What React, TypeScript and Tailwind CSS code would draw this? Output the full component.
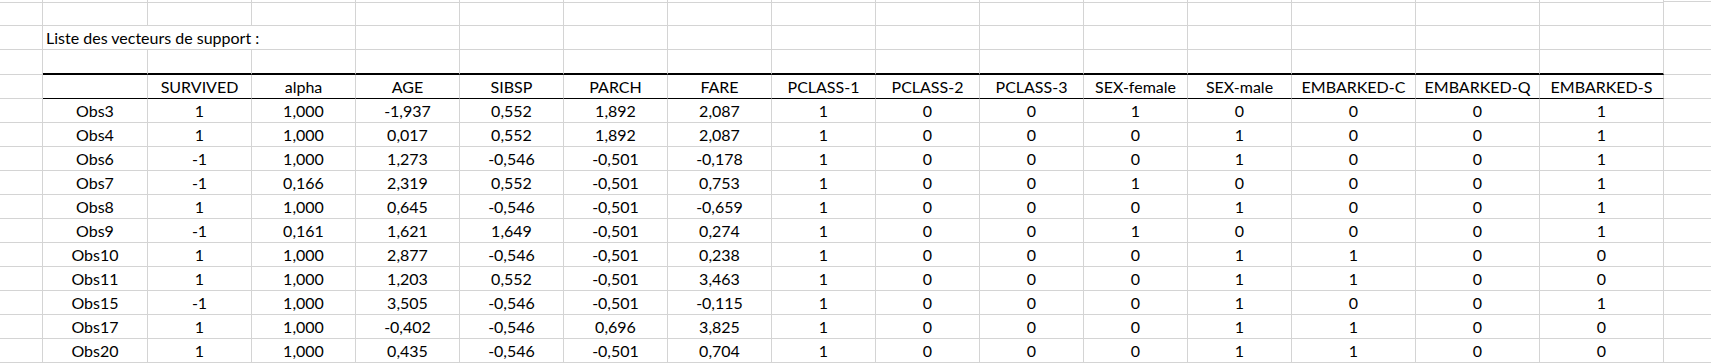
import React from "react";

const headers = [
  "SURVIVED",
  "alpha",
  "AGE",
  "SIBSP",
  "PARCH",
  "FARE",
  "PCLASS-1",
  "PCLASS-2",
  "PCLASS-3",
  "SEX-female",
  "SEX-male",
  "EMBARKED-C",
  "EMBARKED-Q",
  "EMBARKED-S",
];

const rows: [string, string[]][] = [
  ["Obs3", ["1", "1,000", "-1,937", "0,552", "1,892", "2,087", "1", "0", "0", "1", "0", "0", "0", "1"]],
  ["Obs4", ["1", "1,000", "0,017", "0,552", "1,892", "2,087", "1", "0", "0", "0", "1", "0", "0", "1"]],
  ["Obs6", ["-1", "1,000", "1,273", "-0,546", "-0,501", "-0,178", "1", "0", "0", "0", "1", "0", "0", "1"]],
  ["Obs7", ["-1", "0,166", "2,319", "0,552", "-0,501", "0,753", "1", "0", "0", "1", "0", "0", "0", "1"]],
  ["Obs8", ["1", "1,000", "0,645", "-0,546", "-0,501", "-0,659", "1", "0", "0", "0", "1", "0", "0", "1"]],
  ["Obs9", ["-1", "0,161", "1,621", "1,649", "-0,501", "0,274", "1", "0", "0", "1", "0", "0", "0", "1"]],
  ["Obs10", ["1", "1,000", "2,877", "-0,546", "-0,501", "0,238", "1", "0", "0", "0", "1", "1", "0", "0"]],
  ["Obs11", ["1", "1,000", "1,203", "0,552", "-0,501", "3,463", "1", "0", "0", "0", "1", "1", "0", "0"]],
  ["Obs15", ["-1", "1,000", "3,505", "-0,546", "-0,501", "-0,115", "1", "0", "0", "0", "1", "0", "0", "1"]],
  ["Obs17", ["1", "1,000", "-0,402", "-0,546", "0,696", "3,825", "1", "0", "0", "0", "1", "1", "0", "0"]],
  ["Obs20", ["1", "1,000", "0,435", "-0,546", "-0,501", "0,704", "1", "0", "0", "0", "1", "1", "0", "0"]],
];

const G = "border-[#d4d4d4]";

function Cell({
  children,
  className = "",
}: {
  children?: React.ReactNode;
  className?: string;
}) {
  return (
    <div
      className={`flex items-end justify-center overflow-visible whitespace-nowrap border-r border-b ${G} pb-[2px] leading-[18px] ${className}`}
    >
      {children}
    </div>
  );
}

function EdgeCell({ className = "" }: { className?: string }) {
  return <div className={`border-b ${G} ${className}`} />;
}

export default function App() {
  const emptyRow = (key: string) => (
    <React.Fragment key={key}>
      <Cell />
      {Array.from({ length: 15 }).map((_, i) => (
        <Cell key={i} />
      ))}
      <EdgeCell />
    </React.Fragment>
  );

  return (
    <div
      className="w-[1711px] h-[363px] overflow-hidden bg-white text-black text-[16px]"
      style={{ fontFamily: "Lato, 'Open Sans', sans-serif" }}
    >
      <div className="grid grid-cols-[43px_105px_repeat(11,104px)_repeat(3,124px)_1fr] grid-rows-[2px_24px_24px_25px_24px_repeat(11,24px)]">
        {/* row 0: sliver of previous row */}
        {emptyRow("r0")}
        {/* row 1: empty */}
        {emptyRow("r1")}
        {/* row 2: title */}
        <Cell />
        <div
          className={`col-span-3 flex items-end justify-start whitespace-nowrap border-r border-b ${G} pb-[2px] pl-[3px] leading-[18px]`}
        >
          Liste des vecteurs de support :
        </div>
        {Array.from({ length: 12 }).map((_, i) => (
          <Cell key={`t${i}`} />
        ))}
        <EdgeCell />
        {/* row 3: empty with thick bottom border on table */}
        <Cell />
        {Array.from({ length: 15 }).map((_, i) => (
          <div
            key={`k${i}`}
            className={`border-r ${G} border-b-2 border-b-black`}
          />
        ))}
        <EdgeCell />
        {/* header row */}
        <Cell />
        <Cell className="border-b-black" />
        {headers.map((h) => (
          <Cell key={h} className="border-b-black pb-[1px]">
            {h}
          </Cell>
        ))}
        <EdgeCell />
        {/* data rows */}
        {rows.map(([label, vals]) => (
          <React.Fragment key={label}>
            <Cell />
            <Cell>{label}</Cell>
            {vals.map((v, i) => (
              <Cell key={i}>{v}</Cell>
            ))}
            <EdgeCell />
          </React.Fragment>
        ))}
      </div>
    </div>
  );
}
